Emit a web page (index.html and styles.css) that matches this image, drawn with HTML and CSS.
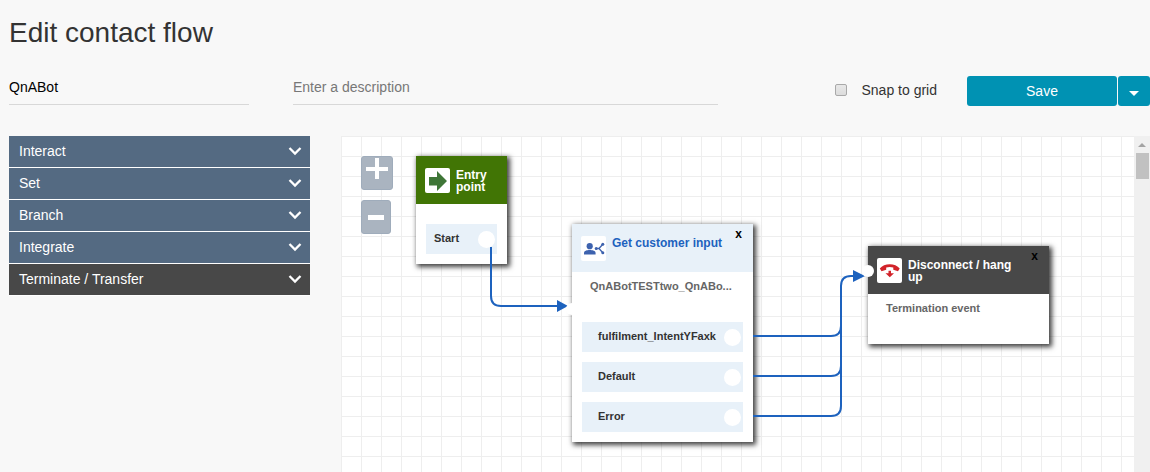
FILE: index.html
```html
<!DOCTYPE html>
<html lang="en">
<head>
<meta charset="utf-8">
<meta name="viewport" content="width=device-width, initial-scale=1">
<title>Edit contact flow</title>
<link rel="stylesheet" href="styles.css">
</head>
<body>
<svg class="defs" aria-hidden="true">
  <symbol id="chevron" viewBox="0 0 14 10"><path d="M1.500 2 7 7.500 12.500 2" fill="none" stroke="currentColor" stroke-width="2.300"/></symbol>
</svg>
<div class="page">
  <header class="heading"><h1 class="title">Edit contact flow</h1></header>

  <form class="toolbar">
    <input class="field field-name" type="text" aria-label="Name" value="QnABot">
    <input class="field field-description" type="text" aria-label="Description" placeholder="Enter a description">
    <label class="snap"><input class="snap-box" type="checkbox"><span>Snap to grid</span></label>
    <div class="save-group">
      <button class="save" type="button">Save</button>
      <button class="save-more" type="button" aria-label="More save options">
        <svg width="10" height="5" viewBox="0 0 10 5"><path d="M0 0H10L5 5Z" fill="#fff"/></svg>
      </button>
    </div>
  </form>

  <main class="workspace">
    <nav class="palette" aria-label="Blocks">
      <button class="group" type="button">Interact<svg class="chevron"><use href="#chevron"/></svg></button>
      <button class="group" type="button">Set<svg class="chevron"><use href="#chevron"/></svg></button>
      <button class="group" type="button">Branch<svg class="chevron"><use href="#chevron"/></svg></button>
      <button class="group" type="button">Integrate<svg class="chevron"><use href="#chevron"/></svg></button>
      <button class="group group-dark" type="button">Terminate / Transfer<svg class="chevron"><use href="#chevron"/></svg></button>
    </nav>

    <section class="viewport" aria-label="Flow canvas">
      <div class="canvas">
        <div class="zoom">
          <button class="zoom-in" type="button" aria-label="Zoom in"><svg width="22" height="22" viewBox="0 0 22 22"><path d="M0 9H22V13H0ZM9 0H13V21H9Z" fill="#fff"/></svg></button>
          <button class="zoom-out" type="button" aria-label="Zoom out"><svg width="16" height="5" viewBox="0 0 16 5"><path d="M0 0H16V5H0Z" fill="#fff"/></svg></button>
        </div>

        <article class="node node-entry">
          <header class="node-head">
            <svg class="node-icon" viewBox="0 0 25 25"><rect width="25" height="25" rx="2" fill="#fff"/><path d="M4 9H12V3L22 13 12 23V17.500H4Z" fill="#3f7637"/></svg>
            <h2 class="node-title">Entry point</h2>
          </header>
          <div class="outlets"><div class="outlet">Start<span class="socket"></span></div></div>
        </article>

        <article class="node node-input">
          <header class="node-head">
            <svg class="node-icon" viewBox="0 0 25 25"><rect width="25" height="25" rx="2" fill="#fff"/><g fill="#3d62ae"><circle cx="8.700" cy="10.200" r="3.100"/><path d="M3 18.500V17C3 14.700 6 14 8.700 14S14.600 14.700 14.600 17V18.500Z"/><circle cx="15.200" cy="12.500" r="1.500"/><circle cx="21.800" cy="8.300" r="1.500"/><circle cx="21.800" cy="16.700" r="1.500"/></g><path d="M15 12.500H18L21.800 8.300M18 12.500 21.800 16.700" fill="none" stroke="#3d62ae" stroke-width="1.300"/></svg>
            <h2 class="node-title">Get customer input</h2>
            <button class="close" type="button" aria-label="Remove Get customer input">x</button>
          </header>
          <p class="node-text">QnABotTESTtwo_QnABo...</p>
          <div class="outlets">
            <div class="outlet">fulfilment_IntentYFaxk<span class="socket"></span></div>
            <div class="outlet">Default<span class="socket"></span></div>
            <div class="outlet">Error<span class="socket"></span></div>
          </div>
        </article>

        <article class="node node-end">
          <header class="node-head">
            <svg class="node-icon" viewBox="0 0 25 25"><rect width="25" height="25" rx="2" fill="#fff"/><path d="M2.800 10.600C7 4.900 18.500 4.900 22.700 10.600L21 13.200 16.300 11.800V9.600Q12.700 8.600 9.200 9.600V11.800L4.500 13.200Z" fill="#d2232a"/><path d="M11.500 12.800H14V15.300H17L12.800 19.300 8.500 15.300H11.500Z" fill="#d2232a"/></svg>
            <h2 class="node-title">Disconnect / hang up</h2>
            <button class="close" type="button" aria-label="Remove Disconnect">x</button>
          </header>
          <p class="node-text">Termination event</p>
        </article>

        <svg class="wires" width="793" height="336" viewBox="0 0 793 336" aria-hidden="true">
          <g fill="none" stroke="#1d62be" stroke-width="2">
            <path d="M150 111V160Q150 170 160 170H217"/>
            <path d="M412 200H490Q500 200 500 190V150Q500 140 510 140H513"/>
            <path d="M412 240H490Q500 240 500 230V150"/>
            <path d="M412 280H490Q500 280 500 270V150"/>
          </g>
          <path d="M216 164 227 170 216 176ZM512 134 524 140 512 146Z" fill="#1d62be"/>
          <circle class="inlet" cx="231" cy="173" r="6"/>
          <circle class="inlet" cx="527" cy="135" r="6"/>
        </svg>
      </div>
      <div class="scrollbar" aria-hidden="true">
        <svg width="8" height="4" viewBox="0 0 8 4"><path d="M0 4 4 0 8 4Z" fill="#a3a3a3"/></svg>
        <div class="thumb"></div>
      </div>
    </section>
  </main>
</div>
</body>
</html>
```
FILE: styles.css
```css
* { box-sizing: border-box; }
body {
  margin: 0;
  background: #f8f8f8;
  color: #333;
  font: 14px/20px "Liberation Sans", Arial, sans-serif;
}
button, input { font: inherit; margin: 0; }
button { border: 0; padding: 0; cursor: pointer; }
svg { flex: none; }
.defs { display: none; }
.page {
  display: flex;
  flex-direction: column;
  min-height: 100vh;
  padding-left: 9px;
}
.heading { padding: 17px 0 27px; }
.title { margin: 0; font-size: 28px; line-height: 32px; font-weight: 400; }

.toolbar { display: flex; align-items: flex-start; }
.field {
  height: 29px;
  padding: 0 0 6px;
  border: 0;
  border-bottom: 1px solid #d8d8d8;
  background: transparent;
  color: #000;
  outline: 0;
}
.field::placeholder { color: #777; opacity: 1; }
.field-name { width: 240px; margin-right: 44px; }
.field-description { flex: 1; min-width: 100px; }
.snap { display: flex; align-items: center; gap: 15px; margin: 4px 30px 0 117px; }
.snap-box {
  appearance: none;
  width: 12px;
  height: 12px;
  border: 1px solid #a9a9a9;
  border-radius: 2px;
  background: linear-gradient(#e8e8e8, #dcdcdc);
}
.save-group { display: flex; gap: 1px; }
.save, .save-more {
  height: 30px;
  border-radius: 3px;
  background: #0092b3;
  color: #fff;
}
.save { width: 150px; }
.save-more { display: flex; align-items: center; justify-content: center; width: 32px; padding-top: 4px; }

.workspace { display: flex; flex: 1; gap: 31px; margin-top: 30px; }
.palette { flex: none; width: 301px; }
.group {
  display: flex;
  align-items: center;
  justify-content: space-between;
  width: 100%;
  height: 32px;
  padding: 0 8px 1px 10px;
  border-bottom: 1px solid #fff;
  background: #546a82;
  color: #fff;
}
.group-dark { background: #484848; }
.chevron { width: 14px; height: 10px; }

.viewport { display: flex; flex: 1; min-width: 0; }
.canvas {
  position: relative;
  flex: 1;
  min-height: 336px;
  overflow: hidden;
  background-color: #fff;
  background-image: linear-gradient(#eee 1px, transparent 1px), linear-gradient(90deg, #eee 1px, transparent 1px);
  background-size: 20px 20px;
}
.scrollbar {
  display: flex;
  flex-direction: column;
  align-items: center;
  flex: none;
  gap: 6px;
  width: 16px;
  padding-top: 7px;
  background: #f0f0f0;
}
.thumb { width: 13px; height: 26px; background: #c1c1c1; }

.zoom { position: absolute; left: 20px; top: 20px; display: grid; gap: 10px; }
.zoom-in, .zoom-out {
  display: flex;
  justify-content: center;
  height: 34px;
  border: 1px solid #9facbb;
  border-radius: 3px;
  background: #aab4c0;
}
.zoom-in { width: 32px; padding-top: 1px; }
.zoom-out { width: 30px; padding-top: 14px; }

.node {
  position: absolute;
  width: 181px;
  background: #fff;
  box-shadow: 2px 2px 5px 1px rgba(0, 0, 0, 0.75);
  font-size: 11px;
  font-weight: 700;
}
.node-entry { left: 75px; top: 20px; width: 91px; }
.node-input { left: 231px; top: 88px; }
.node-end { left: 527px; top: 110px; height: 98px; }
.node-head {
  display: flex;
  gap: 6px;
  height: 48px;
  padding: 12px 11px 0 9px;
  color: #fff;
}
.node-entry .node-head { background: #417505; }
.node-input .node-head { background: #e8f1f9; color: #1d62be; }
.node-end .node-head { background: #484848; }
.node-icon { width: 25px; height: 25px; }
.node-title { flex: 1; margin: 1px 0 0; font-size: 12px; line-height: 12px; }
.close { align-self: flex-start; margin-top: -10px; background: none; color: #000; font-size: 12px; line-height: 16px; font-weight: 700; }
.node-text { margin: 4px 18px 0; color: #666; }
.outlets { display: grid; gap: 10px; padding: 20px 10px 10px; }
.node-text + .outlets { padding-top: 26px; }
.outlet {
  display: flex;
  justify-content: space-between;
  height: 30px;
  padding: 0 2px 0 8px;
  background: #e8f1f9;
  line-height: 28px;
}
.node-input .outlet { padding-left: 16px; }
.socket { width: 17px; height: 17px; margin-top: 7px; border-radius: 50%; background: #fff; }
.wires { position: absolute; left: 0; top: 0; pointer-events: none; }
.inlet { fill: #fff; }
```
